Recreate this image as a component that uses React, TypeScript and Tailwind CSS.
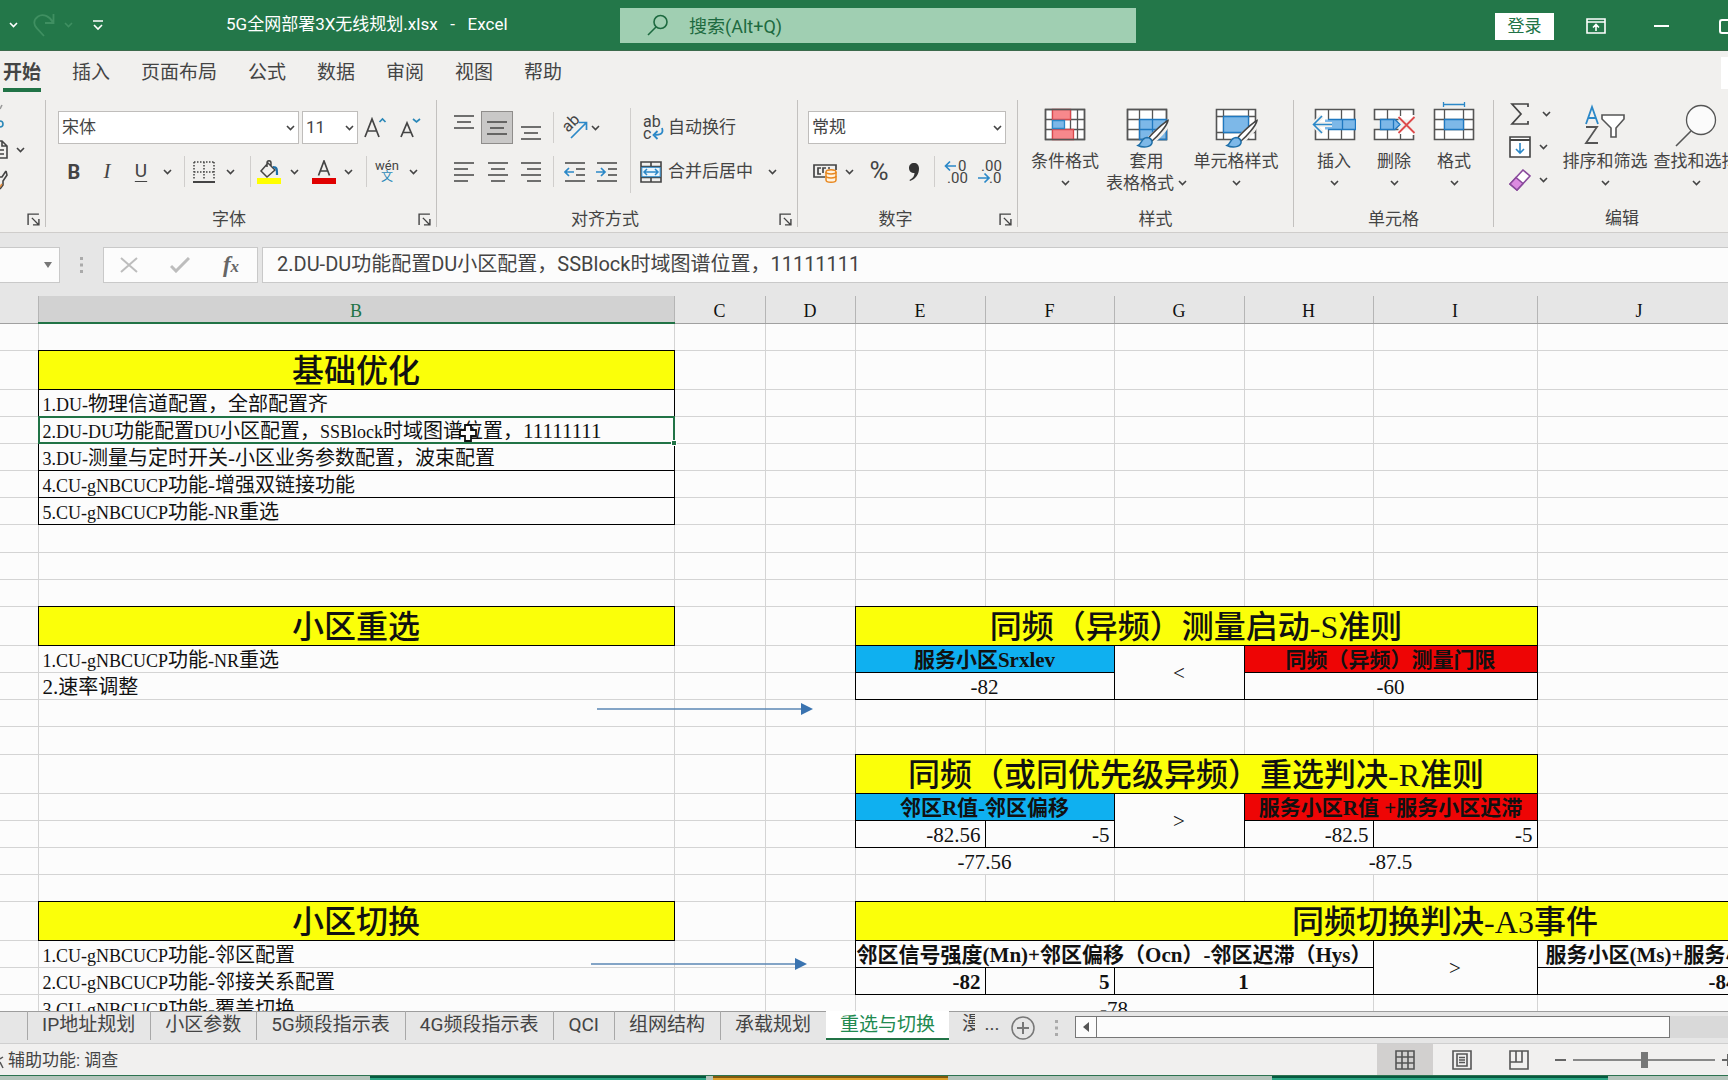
import React from "react";
import clsx from "clsx";

/* ---------- small shared bits ---------- */

const Caret = ({ className }: { className?: string }) => (
  <svg
    className={clsx("h-[6px] w-[9px] shrink-0", className)}
    viewBox="0 0 9 6"
    fill="none"
    stroke="currentColor"
    strokeWidth="1.6"
  >
    <path d="M1 1l3.5 3.5L8 1" />
  </svg>
);

const CaretButton = ({ label, className }: { label: string; className?: string }) => (
  <button
    aria-label={label}
    className={clsx("flex h-[33px] items-center justify-center", className)}
  >
    <Caret />
  </button>
);

const Divider = ({ className }: { className?: string }) => (
  <span className={clsx("flex h-[31px] justify-center", className)}>
    <span className="w-px bg-[#d0cecc]" />
  </span>
);

type IconButtonProps = {
  label: string;
  className: string;
  children: React.ReactNode;
};

const IconButton = ({ label, className, children }: IconButtonProps) => (
  <button
    aria-label={label}
    className={clsx("flex h-[33px] items-center justify-center", className)}
  >
    {children}
  </button>
);

/* ---------- title bar ---------- */

const TitleBar = () => (
  <header className="flex h-[51px] shrink-0 items-center border-b border-[#3c6a4c] bg-[#237749] text-white">
    <div className="flex w-[620px] shrink-0 items-center">
      <button aria-label="撤消选项" className="ml-[9px]">
        <Caret />
      </button>
      <button aria-label="恢复" className="ml-[14px] text-[#3f8f61]">
        <svg className="h-[24px] w-[24px]" viewBox="0 0 24 24" fill="none" stroke="currentColor" strokeWidth="1.8">
          <path d="M21.5 1v9h-8.500M21 9.500C18 3.500 11 0 6 3.500c-5 3.500-4.500 8.500-1 12l7 7.500" />
        </svg>
      </button>
      <button aria-label="恢复选项" className="ml-[8px] text-[#3f8f61]">
        <Caret />
      </button>
      <button aria-label="自定义快速访问工具栏" className="ml-[19px]">
        <svg className="h-[11px] w-[12px]" viewBox="0 0 12 11" fill="none" stroke="currentColor" strokeWidth="1.6">
          <path d="M1 1h10M2 5l4 4 4-4" />
        </svg>
      </button>
      <h1 className="ml-[122px] text-[17px]">
        5G全网部署3X无线规划.xlsx&nbsp;&nbsp;&nbsp;-&nbsp;&nbsp;&nbsp;Excel
      </h1>
    </div>
    <label className="flex h-[35px] w-[516px] shrink-0 items-center bg-[#a0cfb2] text-[#1d6a40]">
      <svg className="ml-[27px] h-[22px] w-[22px]" viewBox="0 0 22 22" fill="none" stroke="currentColor" strokeWidth="1.6">
        <circle cx="13.500" cy="8" r="6.500" />
        <path d="M9 13l-8 8" />
      </svg>
      <input
        aria-label="搜索"
        placeholder="搜索(Alt+Q)"
        className="ml-[20px] flex-1 bg-transparent pt-[2px] text-[18px] outline-none placeholder:text-[#1d6a40]"
      />
    </label>
    <div className="ml-auto flex shrink-0 items-center pt-[2px]">
      <button className="h-[27px] w-[59px] bg-white text-[17px] leading-none text-[#217346]">登录</button>
      <button aria-label="功能区显示选项" className="ml-[32px]">
        <svg className="h-[16px] w-[20px]" viewBox="0 0 20 16" fill="none" stroke="currentColor" strokeWidth="1.600">
          <path d="M1 1h18v14H1zM1 4h18M10 13V6.500M7 9.500l3-3 3 3" />
        </svg>
      </button>
      <button aria-label="最小化" className="ml-[48px] h-[2px] w-[15px] bg-white" />
      <button aria-label="最大化" className="ml-[50px] h-[15px] w-[9px] rounded-l-[3px] border-2 border-r-0 border-white" />
    </div>
  </header>
);

/* ---------- ribbon ---------- */

const ribbonTabs = ["开始", "插入", "页面布局", "公式", "数据", "审阅", "视图", "帮助"];

const RibbonTabs = () => (
  <nav className="flex h-[46px] gap-[31px] pl-[3px] text-[19px]">
    {ribbonTabs.map((tab, i) => (
      <button
        key={tab}
        className={clsx(
          "mt-[8px] h-[33px] shrink-0 border-b-4 pb-[2px] leading-[27px]",
          i === 0 ? "border-[#217346] font-bold" : "border-transparent"
        )}
      >
        {tab}
      </button>
    ))}
    <button aria-label="共享" className="mt-[6px] ml-auto h-[32px] w-[7px] bg-white" />
  </nav>
);

type GroupProps = {
  label?: string;
  launcher?: boolean;
  className: string;
  children: React.ReactNode;
};

const Group = ({ label, launcher, className, children }: GroupProps) => (
  <section className={clsx("flex shrink-0 flex-col border-r border-[#c3c1bf]", className)}>
    <div className="flex h-[109px]">{children}</div>
    <div className="flex h-[17px] items-center">
      <span className="flex-1 pt-[3px] text-center text-[17px] leading-[17px]">{label}</span>
      {launcher && (
        <button aria-label={`${label ?? "剪贴板"}设置`} className="flex w-[24px] justify-center pt-[3px]">
          <svg className="h-[13px] w-[13px]" viewBox="0 0 12 12" fill="none" stroke="currentColor" strokeWidth="1.300">
            <path d="M1 11V1h10M4.500 4.500L11 11M11 5.500V11H5.500" />
          </svg>
        </button>
      )}
    </div>
  </section>
);

const ClipboardGroup = () => (
  <Group className="w-[46px]" launcher>
    <div className="flex w-full flex-col">
      <svg className="mt-[4px] h-[24px] w-[6px]" viewBox="0 0 6 24" fill="none" strokeWidth="1.600">
        <path d="M0 5l2-4" stroke="#999" />
        <circle cx="0" cy="20" r="3" stroke="#2b88b8" />
      </svg>
      <div className="mt-[12px] flex items-center">
        <svg className="h-[19px] w-[8px]" viewBox="0 0 8 19" fill="none" stroke="#444" strokeWidth="1.600">
          <path d="M0 1h2l5 5v12H0M2 1v5h5M0 10h4M0 14h4" />
        </svg>
        <button aria-label="复制选项" className="ml-[8px]">
          <Caret />
        </button>
      </div>
      <svg className="mt-[11px] h-[20px] w-[8px]" viewBox="0 0 8 20" fill="none" strokeWidth="1.600">
        <path d="M6 1L2 7l-2 0M6 1l1 4-4 6 0 4-3 4" stroke="#444" />
        <path d="M0 17l2-3" stroke="#e08a3c" />
      </svg>
    </div>
  </Group>
);

type BoxSelectProps = { label: string; value: string; className: string };

const BoxSelect = ({ label, value, className }: BoxSelectProps) => (
  <div className={clsx("relative h-[33px] shrink-0", className)}>
    <select
      aria-label={label}
      className="h-full w-full appearance-none border border-[#bfbdbb] bg-white pl-[3px] text-[17px] outline-none"
    >
      <option>{value}</option>
    </select>
    <Caret className="pointer-events-none absolute top-[14px] right-[4px]" />
  </div>
);

const FontGroup = () => (
  <Group className="w-[391px]" label="字体" launcher>
    <div className="flex flex-col gap-[11px] pt-[11px] pl-[12px]">
      <div className="flex">
        <BoxSelect label="字体名称" value="宋体" className="w-[241px]" />
        <BoxSelect label="字号" value="11" className="ml-[3px] w-[56px]" />
        <IconButton label="增大字号" className="ml-[6px] w-[23px]">
          <svg className="h-[22px] w-[23px]" viewBox="0 0 23 22" fill="none" strokeWidth="1.700">
            <path d="M1 20L8 2l7 18M3.500 14h9" stroke="#444" />
            <path d="M15.500 5l3-3 3 3" stroke="#2b88b8" />
          </svg>
        </IconButton>
        <IconButton label="减小字号" className="ml-[12px] w-[23px]">
          <svg className="h-[22px] w-[23px]" viewBox="0 0 23 22" fill="none" strokeWidth="1.700">
            <path d="M2 20L8 6l6 14M4 15.500h8" stroke="#444" />
            <path d="M14 2l3.500 3L21 2" stroke="#2b88b8" />
          </svg>
        </IconButton>
      </div>
      <div className="flex items-center">
        <button className="h-[33px] w-8 text-[20px] font-bold">B</button>
        <button className="h-[33px] w-[34px] font-['Liberation_Serif',serif] text-[21px] italic">I</button>
        <button className="h-[33px] w-[34px] text-[19px] underline underline-offset-4">U</button>
        <CaretButton label="下划线选项" className="w-[18px]" />
        <Divider className="w-[17px]" />
        <IconButton label="边框" className="w-[22px]">
          <svg className="h-[22px] w-[22px]" viewBox="0 0 22 22" fill="none" stroke="#444" strokeWidth="1.500">
            <path d="M1 1h20M1 11h20M1 1v18M11 1v18M21 1v18" strokeDasharray="1.500 1.500" />
            <path d="M0 21h22" strokeWidth="2" />
          </svg>
        </IconButton>
        <CaretButton label="边框选项" className="w-[30px]" />
        <Divider className="w-[11px]" />
        <IconButton label="填充颜色" className="w-[26px]">
          <svg className="h-[24px] w-[24px]" viewBox="0 0 24 24" fill="none" strokeWidth="1.500">
            <path d="M4 11l7-8 7 7-8 7zM10 7V3c0-3 4-3 4 0v3" stroke="#444" />
            <path d="M16 7c4 0 4 2 4 8" stroke="#1f6fa8" strokeWidth="2.200" />
            <path d="M0 18h24v6H0z" fill="#ffff00" />
          </svg>
        </IconButton>
        <CaretButton label="填充颜色选项" className="w-[25px]" />
        <IconButton label="字体颜色" className="ml-[5px] w-[24px]">
          <svg className="h-[24px] w-[24px]" viewBox="0 0 24 24" fill="none">
            <path d="M6.500 15.500L12 1l5.500 14.500M8.500 11h7" stroke="#444" strokeWidth="1.700" />
            <path d="M0 18h24v6H0z" fill="#e00000" />
          </svg>
        </IconButton>
        <CaretButton label="字体颜色选项" className="w-[25px]" />
        <Divider className="w-[10px]" />
        <button className="ml-[3px] flex w-[26px] flex-col items-center">
          <span className="text-[13px] leading-[11px]">wén</span>
          <span className="text-[12px] leading-[13px] text-[#2b88b8]">文</span>
        </button>
        <CaretButton label="拼音选项" className="ml-[4px] w-[18px]" />
      </div>
    </div>
  </Group>
);

const Lines = ({ d, className = "" }: { d: string; className?: string }) => (
  <svg className={clsx("h-[26px] w-[20px]", className)} viewBox="0 0 20 26" stroke="#444" strokeWidth="1.700" fill="none">
    <path d={d} />
  </svg>
);

const AlignGroup = () => (
  <Group className="w-[361px]" label="对齐方式" launcher>
    <div className="flex w-[193px] flex-col gap-[11px] pt-[11px] pl-[10px]">
      <div className="flex items-center">
        <IconButton label="顶端对齐" className="w-[34px]">
          <Lines d="M0 1h20M3 7h14M0 13h20" />
        </IconButton>
        <IconButton label="垂直居中" className="mr-px w-[32px] border border-[#8f8d8b] bg-[#c9c8c7]">
          <Lines d="M0 7h20M3 13h14M0 19h20" />
        </IconButton>
        <IconButton label="底端对齐" className="w-[34px]">
          <Lines d="M0 12h20M3 18h14M0 24h20" />
        </IconButton>
        <Divider className="w-[11px]" />
        <IconButton label="方向" className="w-[31px]">
          <svg className="h-[24px] w-[24px] overflow-visible" viewBox="0 0 24 24" fill="none">
            <text x="5" y="17" fontSize="16" fill="#444" transform="rotate(-45 5 17)">
              ab
            </text>
            <path d="M8 22L23 7M16 6.500h7.500V14" stroke="#2b88c8" strokeWidth="1.700" />
          </svg>
        </IconButton>
        <CaretButton label="方向选项" className="w-[10px]" />
      </div>
      <div className="flex items-center">
        <IconButton label="左对齐" className="w-[34px]">
          <Lines d="M0 4h20M0 10h14M0 16h20M0 22h14" />
        </IconButton>
        <IconButton label="居中" className="w-[33px]">
          <Lines d="M0 4h20M3 10h14M0 16h20M3 22h14" />
        </IconButton>
        <IconButton label="右对齐" className="w-[34px]">
          <Lines d="M0 4h20M6 10h14M0 16h20M6 22h14" />
        </IconButton>
        <Divider className="w-[11px]" />
        <IconButton label="减少缩进量" className="w-[31px]">
          <svg className="h-[26px] w-[22px]" viewBox="0 0 22 26" fill="none" strokeWidth="1.700">
            <path d="M1 4h20M12 10h9M12 16h9M1 22h20" stroke="#444" />
            <path d="M1 13h9M5 9l-4 4 4 4" stroke="#2b88c8" />
          </svg>
        </IconButton>
        <IconButton label="增加缩进量" className="w-[34px]">
          <svg className="h-[26px] w-[22px]" viewBox="0 0 22 26" fill="none" strokeWidth="1.700">
            <path d="M1 4h20M12 10h9M12 16h9M1 22h20" stroke="#444" />
            <path d="M0 13h9M5 9l4 4-4 4" stroke="#2b88c8" />
          </svg>
        </IconButton>
      </div>
    </div>
    <span className="mt-[8px] h-[85px] w-px bg-[#d0cecc]" />
    <div className="flex flex-col gap-[11px] pt-[11px] pl-[9px]">
      <button className="flex h-[33px] items-center gap-[4px] text-[17px]">
        <svg className="h-[24px] w-[24px] overflow-visible" viewBox="0 0 24 24" fill="none">
          <text x="3" y="11" fontSize="16" fill="#444">
            ab
          </text>
          <text x="3" y="23" fontSize="16" fill="#444">
            c
          </text>
          <path d="M22 12c2 6-2 7-8 7M17.500 15l-4 4 4 4" stroke="#2b88c8" strokeWidth="1.800" />
        </svg>
        自动换行
      </button>
      <div className="flex items-center">
        <button className="flex h-[33px] items-center gap-[6px] text-[17px]">
          <svg className="h-[22px] w-[22px]" viewBox="0 0 22 22" fill="none">
            <path d="M1 1h20v20H1zM1 5.500h20M1 16.500h20M11 1v4.500M11 16.500V21" stroke="#444" strokeWidth="1.600" />
            <path d="M1.800 6.300h18.400v9.400H1.800z" fill="#eaf5fc" stroke="#2b88c8" strokeWidth="1" />
            <path d="M4 11h14M7 8l-3 3 3 3M15 8l3 3-3 3" stroke="#2b88c8" strokeWidth="1.500" />
          </svg>
          合并后居中
        </button>
        <CaretButton label="合并选项" className="ml-[10px] w-[18px]" />
      </div>
    </div>
  </Group>
);

const NumberGroup = () => (
  <Group className="w-[220px]" label="数字" launcher>
    <div className="flex flex-col gap-[11px] pt-[11px] pl-[10px]">
      <BoxSelect label="数字格式" value="常规" className="w-[198px]" />
      <div className="flex items-center">
        <IconButton label="会计数字格式" className="w-[33px]">
          <svg className="h-[22px] w-[24px]" viewBox="0 0 24 22" fill="none">
            <path d="M12 16H1V4h22v5M8 7H5v6h3M13 7h-3v5M17 7h-2" stroke="#444" strokeWidth="1.700" />
            <path d="M13 11c0-3 10-3 10 0v8c0 3-10 3-10 0z" fill="#fff3e0" stroke="#e8871e" strokeWidth="1.500" />
            <path d="M13 11c0 2.500 10 2.500 10 0M13 15c0 2.500 10 2.500 10 0" stroke="#e8871e" strokeWidth="1.500" />
          </svg>
        </IconButton>
        <CaretButton label="会计格式选项" className="w-[17px]" />
        <button className="h-[33px] w-[42px] text-[26px] leading-[33px]">%</button>
        <IconButton label="千位分隔样式" className="w-[28px]">
          <svg className="h-[20px] w-[12px]" viewBox="0 0 12 20">
            <path d="M6 1c3 0 5 2 5 5.500C11 12 8 17 2 19l-.5-1C5 16 6.500 14 6.500 11 3 11 1 9 1 6s2-5 5-5z" fill="#333" />
          </svg>
        </IconButton>
        <Divider className="w-[12px]" />
        <IconButton label="增加小数位数" className="w-[32px]">
          <svg className="h-[26px] w-[24px] overflow-visible" viewBox="0 0 24 26" fill="none">
            <text x="14" y="12" fontSize="15" fill="#444">
              0
            </text>
            <text x="3" y="24" fontSize="15" fill="#444">
              .00
            </text>
            <path d="M1 7h11M6 2.500L1.500 7 6 11.500" stroke="#2b88c8" strokeWidth="1.700" />
          </svg>
        </IconButton>
        <IconButton label="减少小数位数" className="w-[36px]">
          <svg className="h-[26px] w-[24px] overflow-visible" viewBox="0 0 24 26" fill="none">
            <text x="3" y="12" fontSize="15" fill="#444">
              .00
            </text>
            <text x="11" y="24" fontSize="15" fill="#444">
              .0
            </text>
            <path d="M0 19h11M6.500 14.500L11 19l-4.500 4.500" stroke="#2b88c8" strokeWidth="1.700" />
          </svg>
        </IconButton>
      </div>
    </div>
  </Group>
);

type BigButtonProps = {
  lines: string[];
  className: string;
  children: React.ReactNode;
};

const BigButton = ({ lines, className, children }: BigButtonProps) => (
  <button className={clsx("flex h-[95px] shrink-0 flex-col items-center text-[17px] whitespace-nowrap", className)}>
    {children}
    <span className="mt-[2px] leading-[22px]">{lines[0]}</span>
    <span className="flex h-[22px] items-center gap-[4px] leading-[22px]">
      {lines[1]}
      <Caret />
    </span>
  </button>
);

const BigIcon = ({ children }: { children: React.ReactNode }) => (
  <svg className="h-[48px] w-[44px]" viewBox="0 0 44 48" fill="none" stroke="#555" strokeWidth="1.300">
    {children}
  </svg>
);

const Brush = () => (
  <g>
    <path d="M43.500 23.500c-4 0-16 10-20.500 15.500-4 0-6 3-7 6-1 1-2 2-3 2 6 2 13 1 14-4 6-5 15-14 16.500-19.500z" fill="#f1f0ee" stroke="#f1f0ee" strokeWidth="3" />
    <path d="M43 20.500c-4 2-15 12-19 17l3 3.500c5-4 15-15 16-20.500z" fill="#fff" stroke="#444" strokeWidth="1.500" />
    <path d="M22 37.500c3 0 5.500 2.500 5 5.500-1.500 4.500-9 5-14 2.500 4-1.500 3-7.500 9-8z" fill="#7db8e8" stroke="#1f6fa8" strokeWidth="1.500" />
  </g>
);

const StyleGroup = () => (
  <Group className="w-[276px]" label="样式">
    <div className="flex gap-[3px] pl-[10px]">
      <BigButton lines={["条件格式"]} className="w-[74px]">
        <BigIcon>
          <path d="M2.500 9.500h39v30h-39z" fill="#fff" />
          <path d="M2.500 19.500h39M2.500 29.500h39M9.500 9.500v30M34.500 9.500v30M27.500 9.500v30" />
          <path d="M9.500 9.500h18v10h-18zM9.500 29.500h21v10h-21z" fill="#f7888c" stroke="#d8484c" />
          <path d="M9.500 20.500h12v8h-12z" fill="#7db8e8" stroke="#2b88c8" />
          <path d="M2.500 9.500h39v30h-39z" strokeWidth="1.600" />
        </BigIcon>
      </BigButton>
      <BigButton lines={["套用", "表格格式"]} className="w-[83px]">
        <BigIcon>
          <path d="M2.500 9.500h39v30h-39z" fill="#fff" />
          <path d="M14.500 19.500h27v20h-27z" fill="#7db8e8" stroke="none" />
          <path d="M2.500 19.500h12M2.500 29.500h12M14.500 9.500v30M27.500 9.500v10" />
          <path d="M2.500 9.500h39v30h-39z" strokeWidth="1.600" />
          <path d="M14.500 19.500h27v20h-27zM27.500 19.500v20M14.500 29.500h27" stroke="#1f78c0" />
          <Brush />
        </BigIcon>
      </BigButton>
      <BigButton lines={["单元格样式"]} className="w-[90px]">
        <BigIcon>
          <path d="M2.500 9.500h39v30h-39z" fill="#fff" strokeWidth="1.600" />
          <path d="M2.500 16.500h39M2.500 32.500h39M9.500 9.500v30M34.500 9.500v30" />
          <path d="M9.500 16.500h25v16h-25z" fill="#7db8e8" stroke="#1f78c0" />
          <Brush />
        </BigIcon>
      </BigButton>
    </div>
  </Group>
);

const CellsGroup = () => (
  <Group className="w-[200px]" label="单元格">
    <div className="flex pl-[10px]">
      <BigButton lines={["插入"]} className="w-[60px]">
        <BigIcon>
          <path d="M3.500 9.500h39v30h-39z" fill="#fff" strokeWidth="1.600" />
          <path d="M16.500 9.500v30M29.500 9.500v30" />
          <path d="M13 19.500h31v10H13z" fill="#7db8e8" stroke="none" />
          <path d="M16 19.500h27.500v10H16M30.500 19.500v10" stroke="#1f78c0" />
          <path d="M20 24.500H2M10 16l-8.500 8.500L10 33" stroke="#f1f0ee" strokeWidth="5" />
          <path d="M20 24.500H1M10 16l-8.500 8.500L10 33" stroke="#2b88c8" strokeWidth="1.600" />
        </BigIcon>
      </BigButton>
      <BigButton lines={["删除"]} className="w-[60px]">
        <BigIcon>
          <path d="M2.500 9.500h39v10h-39zM2.500 29.500h39v10h-39z" fill="#fff" stroke="none" />
          <path d="M41.500 15V9.500h-39v10h24M41.500 35v4.500h-39v-10h24" strokeWidth="1.600" />
          <path d="M15.500 9.500v10M28.500 9.500V16M15.500 29.500v10M28.500 34v5.500" />
          <path d="M8.500 19.500H23l5 5-5 5H8.500zM21.500 19.500v10" fill="#7db8e8" stroke="#1f78c0" />
          <path d="M26.500 17l16 16M42.500 17l-16 16" stroke="#dd4a4a" strokeWidth="1.800" />
        </BigIcon>
      </BigButton>
      <BigButton lines={["格式"]} className="w-[60px]">
        <BigIcon>
          <path d="M2.500 9.500h39v30h-39z" fill="#fff" strokeWidth="1.600" />
          <path d="M2.500 19.500h39M2.500 29.500h39M12.500 9.500v30M31.500 9.500v30" />
          <path d="M12.500 19.500h19v10h-19z" fill="#7db8e8" stroke="#1f78c0" />
          <path d="M11.500 4.500h21M11.500 2v5M32.500 2v5" stroke="#2b88c8" />
        </BigIcon>
      </BigButton>
    </div>
  </Group>
);

const EditGroup = () => (
  <section className="flex min-w-[256px] flex-1 flex-col">
    <div className="flex h-[109px]">
      <div className="flex w-[66px] shrink-0 flex-col gap-[7px] pl-[15px]">
        <button aria-label="自动求和" className="flex h-[28px] items-center gap-[11px]">
          <svg className="h-[22px] w-[22px]" viewBox="0 0 22 22" fill="none" stroke="#444" strokeWidth="1.700">
            <path d="M19 4V1H3l9 10-9 10h16v-3" />
          </svg>
          <Caret />
        </button>
        <button aria-label="填充" className="flex h-[24px] items-center gap-[8px]">
          <svg className="h-[22px] w-[22px]" viewBox="0 0 22 22" fill="none" stroke="#444" strokeWidth="1.600">
            <path d="M1 1h20v20H1z" fill="#fff" />
            <path d="M1 4h20" strokeWidth="2" />
            <path d="M11 7v10M7 13l4 4 4-4" stroke="#2b88c8" />
          </svg>
          <Caret />
        </button>
        <button aria-label="清除" className="flex h-[28px] items-center gap-[8px]">
          <svg className="h-[22px] w-[22px]" viewBox="0 0 22 22" fill="none" stroke="#8a4a9c" strokeWidth="1.600">
            <path d="M14 1l7 6L8 21l-7-6z" fill="#fff" />
            <path d="M7 8.500l7 6L8 21l-7-6z" fill="#dc8be0" />
          </svg>
          <Caret />
        </button>
      </div>
      <BigButton lines={["排序和筛选"]} className="w-[90px]">
        <BigIcon>
          <path d="M3 24L9 7l6 17M5 18h8" stroke="#2b88c8" strokeWidth="1.800" />
          <path d="M3 27h11L3 43h12" strokeWidth="1.800" />
          <path d="M19 15h22v4l-8 9v9h-5v-9l-9-9z" fill="#fff" strokeWidth="1.600" />
        </BigIcon>
      </BigButton>
      <BigButton lines={["查找和选择"]} className="w-[92px]">
        <BigIcon>
          <circle cx="27" cy="20" r="14.500" fill="#fbfbfb" />
          <path d="M17 31L2 46" strokeWidth="1.600" />
        </BigIcon>
      </BigButton>
    </div>
    <span className="pt-[1px] text-center text-[17px] leading-[17px]">编辑</span>
  </section>
);

/* ---------- formula bar ---------- */

const FormulaBar = () => (
  <div className="flex h-[63px] shrink-0 items-center bg-[#e6e6e6]">
    <div className="relative">
      <input
        aria-label="名称框"
        className="block h-[36px] w-[60px] border border-l-0 border-[#c9c9c9] bg-[#fcfcfc] outline-none"
      />
      <span className="pointer-events-none absolute top-[15px] right-[8px] h-0 w-0 border-x-4 border-t-[6px] border-x-transparent border-t-[#777]" />
    </div>
    <svg className="mx-[20px] h-[16px] w-[3px]" viewBox="0 0 3 16" fill="#aaa">
      <path d="M0 0h3v3H0zM0 6.500h3v3H0zM0 13h3v3H0z" />
    </svg>
    <div className="flex h-[36px] w-[155px] shrink-0 items-center border border-[#c9c9c9] bg-[#fcfcfc]">
      <button aria-label="取消" className="flex w-[50px] justify-center">
        <svg className="h-[16px] w-[18px]" viewBox="0 0 18 16" fill="none" stroke="#bdbdbd" strokeWidth="2">
          <path d="M1 1l16 14M17 1L1 15" />
        </svg>
      </button>
      <button aria-label="输入" className="flex w-[52px] justify-center">
        <svg className="h-[16px] w-[20px]" viewBox="0 0 20 16" fill="none" stroke="#bdbdbd" strokeWidth="3">
          <path d="M1 9l5 5L19 1" />
        </svg>
      </button>
      <button className="w-[50px] font-['Liberation_Serif',serif] text-[23px] leading-none font-bold text-[#666] italic">
        f<span className="text-[17px]">x</span>
      </button>
    </div>
    <input
      aria-label="编辑栏"
      defaultValue="2.DU-DU功能配置DU小区配置，SSBlock时域图谱位置，11111111"
      className="ml-[4px] h-[36px] min-w-0 flex-1 border border-r-0 border-[#c9c9c9] bg-[#fcfcfc] pb-[4px] pl-[14px] text-[20px] text-[#444] outline-none"
    />
  </div>
);

/* ---------- worksheet ---------- */

type Cell = {
  text: string;
  kind: keyof typeof cellStyles;
  cols?: number;
  rows?: number;
  selected?: boolean;
};

// a number stands for that many empty cells
type Row = { height?: "tall" | "plus"; cells: (Cell | number)[] };

const cellStyles = {
  title: "border border-black bg-[#fbff09] text-center text-[32px] leading-[32px] font-medium",
  item: "border border-black pl-[4px] text-left",
  note: "pl-[4px] text-left",
  blue: "border border-black bg-[#0fb0f0] text-center text-[21px] font-bold",
  red: "border border-black bg-[#ee0505] text-center text-[21px] font-bold",
  head: "border border-black text-center text-[21px] font-bold",
  headLeft: "border border-black pl-[8px] text-left text-[21px] font-bold",
  number: "border border-black pr-[4px] text-right",
  center: "border border-black text-center",
  boldNumber: "border border-black pr-[4px] text-right font-bold",
  boldCenter: "border border-black text-center font-bold",
  free: "text-center",
};

// letters run wider than the half-width digits, so they are set a little smaller
const latinSize = (kind: Cell["kind"], run: string) => {
  if (kind === "title") return "text-[32px]";
  if (["blue", "red", "head", "headLeft"].includes(kind)) return "text-[21px]";
  return /[A-Z]/.test(run) ? "text-[18px]" : "text-[21px]";
};

const columns = [
  { name: "", width: "w-[38px]" },
  { name: "B", width: "w-[636px]" },
  { name: "C", width: "w-[91px]" },
  { name: "D", width: "w-[90px]" },
  { name: "E", width: "w-[130px]" },
  { name: "F", width: "w-[129px]" },
  { name: "G", width: "w-[130px]" },
  { name: "H", width: "w-[129px]" },
  { name: "I", width: "w-[164px]" },
  { name: "J", width: "w-[204px]" },
  { name: "K", width: "w-[139px]" },
  { name: "L", width: "w-[155px]" },
];

const rows: Row[] = [
  { cells: [12] },
  { height: "tall", cells: [1, { text: "基础优化", kind: "title" }, 10] },
  { cells: [1, { text: "1.DU-物理信道配置，全部配置齐", kind: "item" }, 10] },
  {
    cells: [
      1,
      { text: "2.DU-DU功能配置DU小区配置，SSBlock时域图谱位置，11111111", kind: "item", selected: true },
      10,
    ],
  },
  { cells: [1, { text: "3.DU-测量与定时开关-小区业务参数配置，波束配置", kind: "item" }, 10] },
  { cells: [1, { text: "4.CU-gNBCUCP功能-增强双链接功能", kind: "item" }, 10] },
  { cells: [1, { text: "5.CU-gNBCUCP功能-NR重选", kind: "item" }, 10] },
  { height: "plus", cells: [12] },
  { cells: [12] },
  { cells: [12] },
  {
    height: "tall",
    cells: [
      1,
      { text: "小区重选", kind: "title" },
      2,
      { text: "同频（异频）测量启动-S准则", kind: "title", cols: 5 },
      3,
    ],
  },
  {
    cells: [
      1,
      { text: "1.CU-gNBCUCP功能-NR重选", kind: "note" },
      2,
      { text: "服务小区Srxlev", kind: "blue", cols: 2 },
      { text: "<", kind: "center", rows: 2 },
      { text: "同频（异频）测量门限", kind: "red", cols: 2 },
      3,
    ],
  },
  {
    cells: [
      1,
      { text: "2.速率调整", kind: "note" },
      2,
      { text: "-82", kind: "center", cols: 2 },
      { text: "-60", kind: "center", cols: 2 },
      3,
    ],
  },
  { cells: [12] },
  { height: "plus", cells: [12] },
  { height: "tall", cells: [4, { text: "同频（或同优先级异频）重选判决-R准则", kind: "title", cols: 5 }, 3] },
  {
    cells: [
      4,
      { text: "邻区R值-邻区偏移", kind: "blue", cols: 2 },
      { text: ">", kind: "center", rows: 2 },
      { text: "服务小区R值 +服务小区迟滞", kind: "red", cols: 2 },
      3,
    ],
  },
  {
    cells: [
      4,
      { text: "-82.56", kind: "number" },
      { text: "-5", kind: "number" },
      { text: "-82.5", kind: "number" },
      { text: "-5", kind: "number" },
      3,
    ],
  },
  {
    cells: [4, { text: "-77.56", kind: "free", cols: 2 }, 1, { text: "-87.5", kind: "free", cols: 2 }, 3],
  },
  { cells: [12] },
  {
    height: "tall",
    cells: [1, { text: "小区切换", kind: "title" }, 2, { text: "同频切换判决-A3事件", kind: "title", cols: 8 }],
  },
  {
    cells: [
      1,
      { text: "1.CU-gNBCUCP功能-邻区配置", kind: "note" },
      2,
      { text: "邻区信号强度(Mn)+邻区偏移（Ocn）-邻区迟滞（Hys）", kind: "head", cols: 4 },
      { text: ">", kind: "center", rows: 2 },
      { text: "服务小区(Ms)+服务小区", kind: "headLeft", cols: 3 },
    ],
  },
  {
    cells: [
      1,
      { text: "2.CU-gNBCUCP功能-邻接关系配置", kind: "note" },
      2,
      { text: "-82", kind: "boldNumber" },
      { text: "5", kind: "boldNumber" },
      { text: "1", kind: "boldCenter", cols: 2 },
      { text: "-84", kind: "boldNumber" },
      2,
    ],
  },
  {
    cells: [1, { text: "3.CU-gNBCUCP功能-覆盖切换", kind: "note" }, 2, { text: "-78", kind: "free", cols: 4 }, 4],
  },
];

const CellText = ({ cell }: { cell: Cell }) => (
  <>
    {cell.text.split(/([\x20-\x7e]+)/).map((run, i) =>
      i % 2 === 1 ? (
        <span
          key={i}
          className={clsx("font-['Liberation_Serif',serif] leading-none whitespace-pre", latinSize(cell.kind, run))}
        >
          {run}
        </span>
      ) : (
        run
      )
    )}
  </>
);

const Selection = () => (
  <>
    <span className="absolute -inset-px border-2 border-[#217346]" />
    <span className="absolute -right-[3px] -bottom-[3px] h-[6px] w-[6px] border border-white bg-[#217346]" />
    <svg className="absolute top-[7px] left-[420px] h-[18px] w-[18px]" viewBox="0 0 18 18">
      <path d="M6 1h6v5h5v6h-5v5H6v-5H1V6h5z" fill="#fff" stroke="#111" strokeWidth="1.800" />
    </svg>
  </>
);

const Arrow = ({ className }: { className: string }) => (
  <svg className={clsx("absolute h-[12px] w-[216px]", className)} viewBox="0 0 216 12">
    <path d="M0 6h206" stroke="#5b87b5" strokeWidth="1.500" />
    <path d="M204 0l12 6-12 6z" fill="#3a73b0" />
  </svg>
);

const Sheet = () => (
  <main className="relative min-h-0 flex-1 overflow-hidden bg-[#fcfcfc]">
    <table className="w-[2035px] table-fixed border-collapse text-[20px] leading-[22px] whitespace-nowrap text-[#111]">
      <colgroup>
        {columns.map((col) => (
          <col key={col.name} className={clsx("border-r border-[#d4d4d4]", col.width)} />
        ))}
      </colgroup>
      <thead>
        <tr className="h-[27px] bg-[#e6e6e6]">
          {columns.map((col) => (
            <th
              key={col.name}
              className={clsx(
                "border-r border-r-[#b5b5b5] p-0 pt-[4px] font-['Liberation_Serif',serif] text-[18px] font-normal",
                col.name === "B"
                  ? "border-b-2 border-b-[#217346] bg-[#d2d2d2] text-[#217346]"
                  : "border-b border-b-[#a0a0a0]"
              )}
            >
              {col.name}
            </th>
          ))}
        </tr>
      </thead>
      <tbody>
        {rows.map((row, r) => (
          <tr
            key={r}
            className={clsx(
              "border-b border-[#d4d4d4]",
              row.height === "tall" ? "h-[39px]" : row.height === "plus" ? "h-[28px]" : "h-[27px]"
            )}
          >
            {row.cells.map((cell, c) =>
              typeof cell === "number" ? (
                Array.from({ length: cell }, (_, k) => <td key={`${c}-${k}`} className="p-0" />)
              ) : (
                <td
                  key={c}
                  colSpan={cell.cols}
                  rowSpan={cell.rows}
                  className={clsx("relative p-0 pt-[2px]", cellStyles[cell.kind])}
                >
                  <CellText cell={cell} />
                  {cell.selected && <Selection />}
                </td>
              )
            )}
          </tr>
        ))}
      </tbody>
    </table>
    <Arrow className="top-[407px] left-[597px]" />
    <Arrow className="top-[662px] left-[591px]" />
  </main>
);

/* ---------- sheet tabs + status bar ---------- */

const sheets = ["IP地址规划", "小区参数", "5G频段指示表", "4G频段指示表", "QCI", "组网结构", "承载规划", "重选与切换"];

const SheetTabs = () => (
  <footer className="flex h-[33px] shrink-0 items-start border-t border-[#9d9d9d] border-b border-b-[#cfcfcf] bg-[#e6e6e6] text-[19px] text-[#444]">
    <div className="ml-[27px] flex gap-px">
      {sheets.map((name) => (
        <button
          key={name}
          className={clsx(
            "-mt-px h-[29px] px-[14px] leading-[24px] whitespace-nowrap",
            name === "重选与切换"
              ? "border-b-2 border-[#217346] bg-white text-[#218a50]"
              : "border-l border-[#a8a8a8] pb-[2px]"
          )}
        >
          {name}
        </button>
      ))}
    </div>
    <button className="ml-[13px] w-[13px] overflow-hidden text-left leading-[24px] whitespace-nowrap">漫</button>
    <button className="ml-[9px] w-[16px] leading-[24px]">...</button>
    <button aria-label="新工作表" className="mt-[4px] ml-[11px]">
      <svg className="h-[24px] w-[24px]" viewBox="0 0 24 24" fill="none" stroke="#777" strokeWidth="1.500">
        <circle cx="12" cy="12" r="11" />
        <path d="M6 12h12M12 6v12" strokeWidth="2" />
      </svg>
    </button>
    <svg className="mt-[8px] ml-[20px] h-[16px] w-[3px]" viewBox="0 0 3 16" fill="#aaa">
      <path d="M0 0h3v3H0zM0 6.500h3v3H0zM0 13h3v3H0z" />
    </svg>
    <div className="mt-[4px] ml-[17px] flex h-[22px] flex-1 bg-[#d9d9d9]">
      <button aria-label="向左滚动" className="flex w-[22px] items-center justify-center border border-[#777] bg-[#fcfcfc]">
        <span className="h-0 w-0 border-y-[5px] border-r-[6px] border-y-transparent border-r-[#555]" />
      </button>
      <div className="mr-[58px] -ml-px flex-1 border border-[#777] bg-[#fcfcfc]" />
    </div>
  </footer>
);

const StatusBar = () => (
  <div className="flex h-[31px] shrink-0 items-center bg-[#f1f0ef] text-[17px] text-[#444]">
    <svg className="h-[18px] w-[4px]" viewBox="0 0 4 18" fill="none" stroke="#555" strokeWidth="1.500">
      <path d="M0 8l3-2M0 11l3 6" />
    </svg>
    <span className="ml-[4px] pt-[2px] leading-none">辅助功能: 调查</span>
    <div className="ml-auto flex h-full items-center">
      <IconButton label="普通" className="h-full w-[56px] bg-[#d2d0cf]">
        <svg className="h-[20px] w-[20px]" viewBox="0 0 20 20" fill="none" stroke="#555" strokeWidth="1.600">
          <path d="M1 1h18v18H1zM1 7h18M1 13h18M7 1v18M13 1v18" />
        </svg>
      </IconButton>
      <IconButton label="页面布局视图" className="w-[57px]">
        <svg className="h-[20px] w-[20px]" viewBox="0 0 20 20" fill="none" stroke="#555" strokeWidth="1.600">
          <path d="M1 1h18v18H1zM5 4h10v12H5zM7 7.500h6M7 10h6M7 12.500h6" />
        </svg>
      </IconButton>
      <IconButton label="分页预览" className="w-[57px]">
        <svg className="h-[20px] w-[20px]" viewBox="0 0 20 20" fill="none" stroke="#555" strokeWidth="1.600">
          <path d="M1 1h18v18H1zM1 12h12V1M7 1v11" />
        </svg>
      </IconButton>
      <button aria-label="缩小" className="ml-[8px] h-[2px] w-[11px] bg-[#666]" />
      <input
        type="range"
        aria-label="显示比例"
        defaultValue={50}
        className="ml-[7px] h-[16px] w-[142px] appearance-none bg-transparent [&::-webkit-slider-runnable-track]:h-[2px] [&::-webkit-slider-runnable-track]:bg-[#888] [&::-webkit-slider-thumb]:-mt-[7px] [&::-webkit-slider-thumb]:h-[16px] [&::-webkit-slider-thumb]:w-[7px] [&::-webkit-slider-thumb]:appearance-none [&::-webkit-slider-thumb]:bg-[#777]"
      />
      <button aria-label="放大" className="ml-[7px] w-[6px]">
        <svg className="h-[12px] w-[6px]" viewBox="0 0 6 12" stroke="#666" strokeWidth="2">
          <path d="M0 6h6M6 0v12" />
        </svg>
      </button>
    </div>
  </div>
);

// top edge of the window that lies behind the workbook
const BottomStrip = () => (
  <div className="flex h-[5px] shrink-0 border-t border-[#2c7350] bg-[#b4c4bb]">
    <span className="ml-[370px] w-[336px] border-t-2 border-[#08583f] bg-[#2ba583]" />
    <span className="ml-[7px] w-[235px] border-t-2 border-[#7d5a10] bg-[#dfa02a]" />
    <span className="mr-[120px] ml-auto w-[336px] border-t-2 border-[#08583f] bg-[#2ba583]" />
  </div>
);

const App = () => (
  <div className="flex h-screen flex-col overflow-hidden bg-[#e6e6e6] font-[Roboto,'Noto_Sans_CJK_SC',sans-serif] text-[#444]">
    <TitleBar />
    <div className="shrink-0 border-b border-[#cfcdcb] bg-[#f1f0ee]">
      <RibbonTabs />
      <div className="flex overflow-hidden pt-[3px] pb-[5px]">
        <ClipboardGroup />
        <FontGroup />
        <AlignGroup />
        <NumberGroup />
        <StyleGroup />
        <CellsGroup />
        <EditGroup />
      </div>
    </div>
    <FormulaBar />
    <Sheet />
    <SheetTabs />
    <StatusBar />
    <BottomStrip />
  </div>
);

export default App;
